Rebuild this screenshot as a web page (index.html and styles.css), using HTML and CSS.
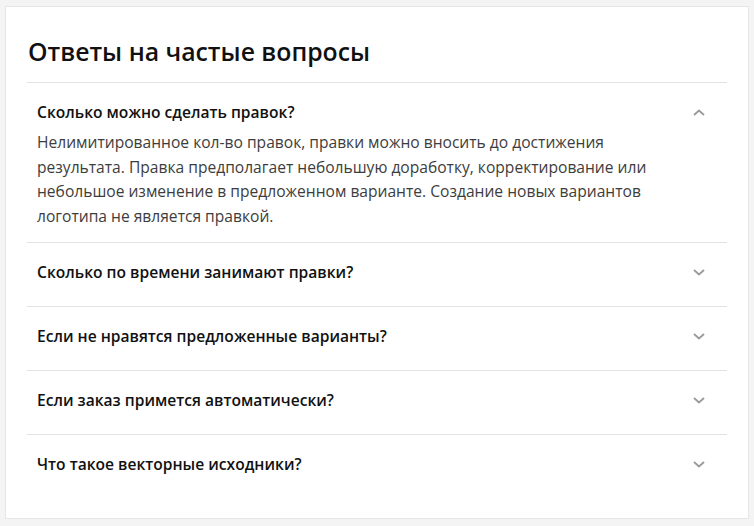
FILE: index.html
```html
<!DOCTYPE html>
<html lang="ru">
<head>
<meta charset="utf-8">
<link rel="stylesheet" href="styles.css">
</head>
<body>
<section class="card">
  <h2 class="title">Ответы на частые вопросы</h2>
  <div class="faq">
    <div class="item open">
      <div class="q">
        <span>Сколько можно сделать правок?</span>
        <svg class="chev" width="12" height="7" viewBox="0 0 12 7"><path d="M1 6L6 1.5L11 6" fill="none" stroke="#9a9a9a" stroke-width="1.8"/></svg>
      </div>
      <p class="a">Нелимитированное кол-во правок, правки можно вносить до достижения результата. Правка предполагает небольшую доработку, корректирование или небольшое изменение в предложенном варианте. Создание новых вариантов логотипа не является правкой.</p>
    </div>
    <div class="item">
      <div class="q">
        <span>Сколько по времени занимают правки?</span>
        <svg class="chev" width="12" height="7" viewBox="0 0 12 7"><path d="M1 1L6 5.5L11 1" fill="none" stroke="#9a9a9a" stroke-width="1.8"/></svg>
      </div>
    </div>
    <div class="item">
      <div class="q">
        <span>Если не нравятся предложенные варианты?</span>
        <svg class="chev" width="12" height="7" viewBox="0 0 12 7"><path d="M1 1L6 5.5L11 1" fill="none" stroke="#9a9a9a" stroke-width="1.8"/></svg>
      </div>
    </div>
    <div class="item">
      <div class="q">
        <span>Если заказ примется автоматически?</span>
        <svg class="chev" width="12" height="7" viewBox="0 0 12 7"><path d="M1 1L6 5.5L11 1" fill="none" stroke="#9a9a9a" stroke-width="1.8"/></svg>
      </div>
    </div>
    <div class="item">
      <div class="q">
        <span>Что такое векторные исходники?</span>
        <svg class="chev" width="12" height="7" viewBox="0 0 12 7"><path d="M1 1L6 5.5L11 1" fill="none" stroke="#9a9a9a" stroke-width="1.8"/></svg>
      </div>
    </div>
  </div>
</section>
</body>
</html>
```
FILE: styles.css
```css
html, body {
  margin: 0;
  padding: 0;
  background: #f4f4f4;
}
body {
  padding: 6px 5px;
  font-family: "Open Sans", "Noto Sans", sans-serif;
  color: #111;
}
.card {
  background: #fff;
  border: 1px solid #e6e6e6;
  padding: 25px 21px 21px;
  height: 465px;
}
.title {
  margin: 0;
  font-size: 24.8px;
  font-weight: 600;
  line-height: 38px;
  padding-left: 1px;
  padding-bottom: 12px;
  border-bottom: 1px solid #e3e3e3;
  color: #111;
}
.item {
  border-bottom: 1px solid #e3e3e3;
  padding: 17px 22px 22px 10px;
}
.item:last-child {
  border-bottom: 0;
}
.q {
  display: flex;
  justify-content: space-between;
  align-items: center;
  font-size: 15.6px;
  font-weight: 600;
  line-height: 24px;
}
.chev {
  display: block;
}
.a {
  margin: 6px 0 0;
  font-size: 15.6px;
  line-height: 24.5px;
  color: #3d3d3d;
  padding-right: 30px;
}
.item.open {
  padding-bottom: 14px;
}
```
